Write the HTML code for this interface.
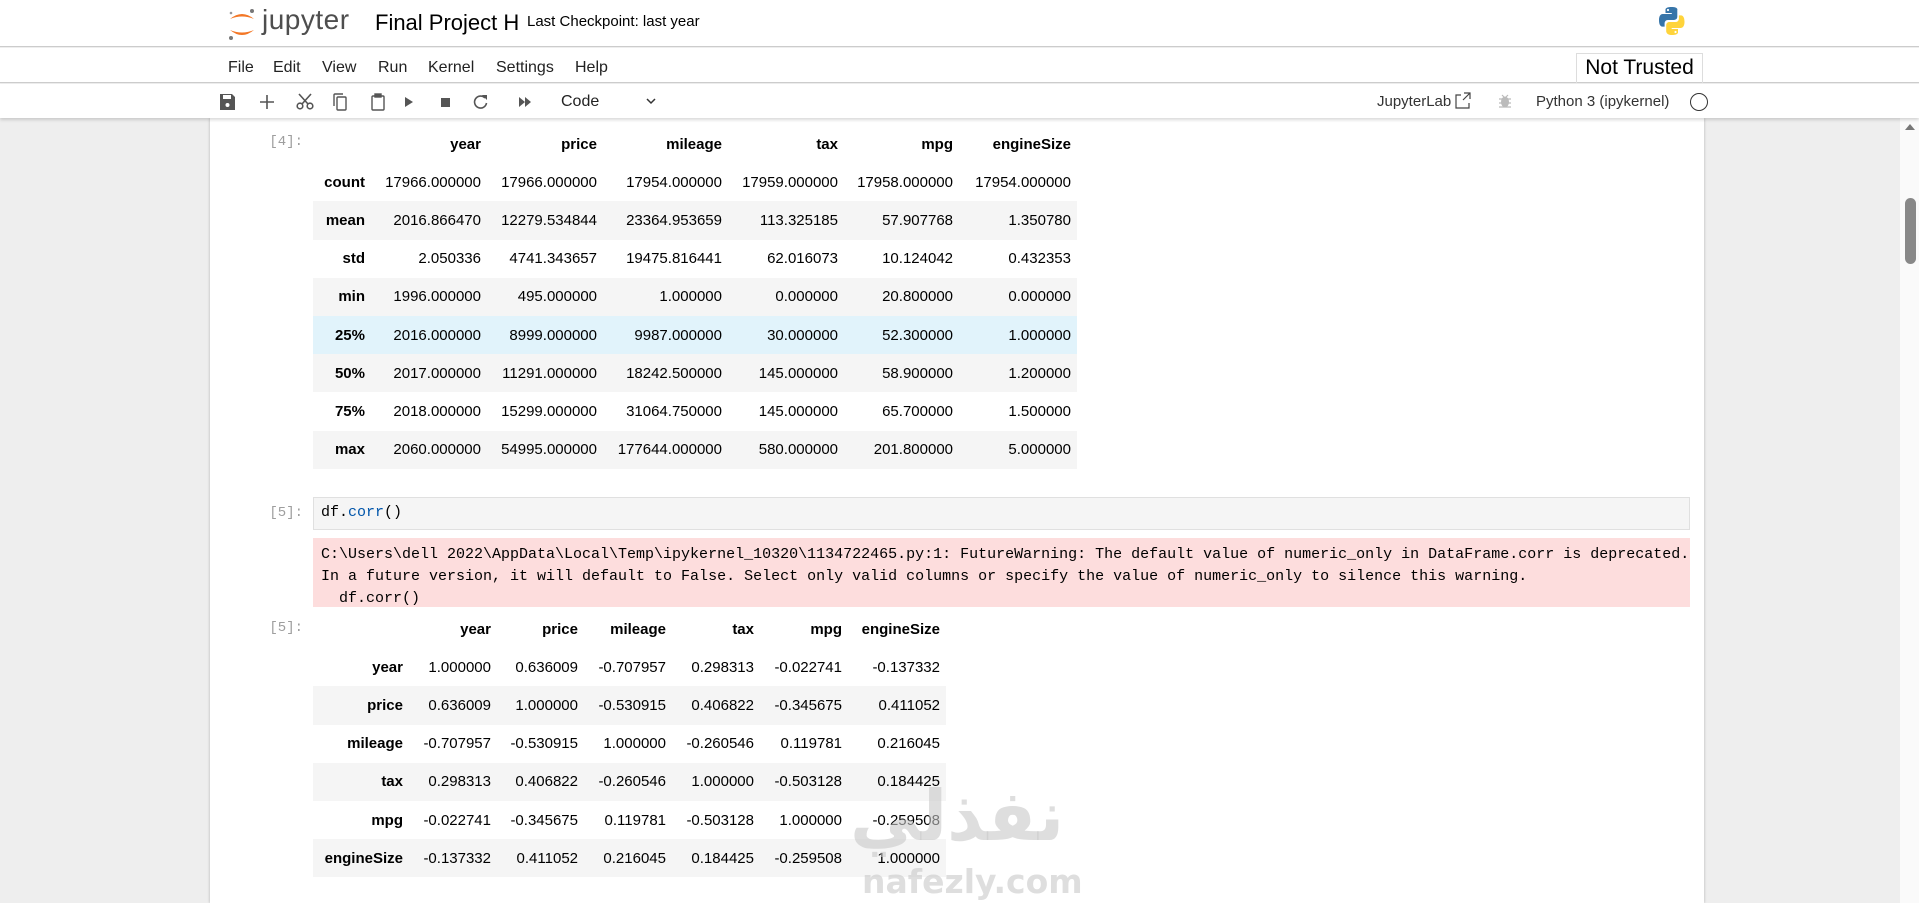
<!DOCTYPE html>
<html><head><meta charset="utf-8"><style>
*{margin:0;padding:0;box-sizing:border-box}
body{width:1919px;height:903px;overflow:hidden;font-family:"Liberation Sans",sans-serif;background:#eee;position:relative;color:#000}
.abs{position:absolute}
#hdr{left:0;top:0;width:1919px;height:47px;background:#fff;border-bottom:1px solid #ccc}
#menu{left:0;top:48px;width:1919px;height:35px;background:#fff;border-bottom:1px solid #ccc;font-size:16px;color:#222}
#tool{left:0;top:84px;width:1919px;height:34px;background:#fff;box-shadow:0 2px 3px rgba(0,0,0,.15);z-index:2}
#nb{left:210px;top:118px;width:1494px;height:785px;background:#fff;box-shadow:-1px 0 2px rgba(0,0,0,.12),1px 0 2px rgba(0,0,0,.12)}
.prompt{position:absolute;font-family:"Liberation Mono",monospace;font-size:14px;color:#9e9e9e;width:90px;text-align:right}
table{border-collapse:collapse;font-size:15px;position:absolute}
td,th{height:38.2px;text-align:right;padding:0 6px;white-space:nowrap}
th{font-weight:bold}
tbody tr:nth-child(even){background:#f5f5f5}
tr.hov{background:#e1f3fb!important}
.mono{font-family:"Liberation Mono",monospace;font-size:15px}
</style></head><body>
<div id="hdr" class="abs">
  <svg class="abs" style="left:224px;top:6px" width="36" height="36" viewBox="0 0 36 36">
    <path d="M6 13 Q18 3 30 13 Q18 8 6 13Z" fill="#f37726"/>
    <path d="M6 24 Q18 34 30 24 Q18 29 6 24Z" fill="#f37726"/>
    <circle cx="28" cy="5" r="2" fill="#767677"/><circle cx="7" cy="32" r="2" fill="#767677"/><circle cx="7" cy="7" r="1.3" fill="#989798"/>
  </svg>
  <div class="abs" style="left:262px;top:4px;font-size:28px;color:#4e4e4e;letter-spacing:0.5px">jupyter</div>
  <div class="abs" style="left:375px;top:10px;font-size:22px;color:#000">Final Project H</div>
  <div class="abs" style="left:527px;top:13px;font-size:15px;color:#000">Last Checkpoint: last year</div>
  <svg class="abs" style="left:1658px;top:6px" width="28" height="30" viewBox="0 0 28 30">
    <path d="M13.5 1C7 1 7.5 3.8 7.5 3.8V7h6.3v1H5s-4-.5-4 6.2 3.5 6.4 3.5 6.4h2.1v-3.1s-.1-3.5 3.4-3.5h6s3.300 0 3.3-3.2V4.3S20.8 1 13.5 1z" fill="#3775a9"/>
    <circle cx="10" cy="4" r="1.1" fill="#fff"/>
    <path d="M14 29c6.5 0 6-2.8 6-2.8V23h-6.3v-1h8.8s4 .5 4-6.2-3.5-6.4-3.5-6.4h-2.1v3.1s.1 3.5-3.4 3.5h-6s-3.3 0-3.3 3.2v5.5S7.7 29 14 29z" fill="#ffd43b"/>
    <circle cx="17.5" cy="26" r="1.1" fill="#fff"/>
  </svg>
</div>
<div id="menu" class="abs">
  <span class="abs" style="left:228px;top:11px">File</span>
  <span class="abs" style="left:273px;top:11px">Edit</span>
  <span class="abs" style="left:322px;top:11px">View</span>
  <span class="abs" style="left:378px;top:11px">Run</span>
  <span class="abs" style="left:428px;top:11px">Kernel</span>
  <span class="abs" style="left:496px;top:11px">Settings</span>
  <span class="abs" style="left:575px;top:11px">Help</span>
  <div class="abs" style="left:1576px;top:5px;width:127px;height:30px;border:1px solid #ddd;border-bottom:none;font-size:21px;color:#000;text-align:center;line-height:28px">Not Trusted</div>
</div>
<div id="tool" class="abs">
  <svg class="abs" style="left:219px;top:9px" width="330" height="18" viewBox="0 0 330 18" fill="#555" stroke="#555">
    <path d="M1 1h12l3 3v13H1z M4 2h8v4H4z" stroke="none" fill-rule="evenodd"/><circle cx="8.5" cy="12" r="2" fill="#fff" stroke="none"/>
    <path d="M48 2v14M41 9h14" stroke-width="1.6" fill="none"/>
    <g fill="none" stroke-width="1.6"><circle cx="81" cy="13" r="2.8"/><circle cx="91" cy="13" r="2.8"/><path d="M83 11L92 1M89 11L80 1"/></g>
    <g fill="none" stroke-width="1.4"><rect x="118" y="4" width="9" height="13" rx="1"/><path d="M115 13V2a1 1 0 0 1 1-1h8"/></g>
    <g fill="none" stroke-width="1.4"><rect x="153" y="3" width="12" height="14" rx="1"/><rect x="156" y="1" width="6" height="3" fill="#555"/></g>
    <path d="M186 4l8 5-8 5z" stroke="none"/>
    <rect x="222" y="5" width="9" height="9" stroke="none"/>
    <path d="M266 5a6 6 0 1 0 1.5 5" fill="none" stroke-width="1.6"/><path d="M263 2h5v5z" stroke="none"/>
    <path d="M300 4l6 5-6 5zM306 4l6 5-6 5z" stroke="none"/>
  </svg>
  <span class="abs" style="left:561px;top:9px;font-size:16px;color:#222">Code</span>
  <svg class="abs" style="left:645px;top:13px" width="12" height="10"><path d="M2 2l4 4 4-4" stroke="#333" stroke-width="1.5" fill="none"/></svg>
  <span class="abs" style="left:1377px;top:9px;font-size:15px;color:#333">JupyterLab</span>
  <svg class="abs" style="left:1455px;top:8px" width="16" height="18"><path d="M6 3H1v13h13v-5M9 1h6v6M15 1L8 8" stroke="#444" stroke-width="1.2" fill="none"/></svg>
  <svg class="abs" style="left:1498px;top:9px" width="14" height="16"><ellipse cx="7" cy="9" rx="4" ry="5.5" fill="#bbb"/><path d="M1 6h12M1 10h12M1 14h12M4 2l2 2M10 2l-2 2" stroke="#bbb" stroke-width="1.2"/></svg>
  <span class="abs" style="left:1536px;top:9px;font-size:15px;color:#333">Python 3 (ipykernel)</span>
  <div class="abs" style="left:1690px;top:9px;width:18px;height:18px;border:1.5px solid #333;border-radius:50%"></div>
</div>
<div class="abs" style="left:1900px;top:118px;width:19px;height:785px;background:#fafafa"></div>
<svg class="abs" style="left:1904px;top:122px" width="12" height="10"><path d="M1 8l5-6 5 6z" fill="#777"/></svg>
<div class="abs" style="left:1905px;top:198px;width:11px;height:66px;background:#888;border-radius:6px"></div>

<div id="nb" class="abs">
  <div class="prompt" style="left:0;top:16px;width:93px">[4]:</div>
  <table style="left:103px;top:7px">
    <thead><tr><th style="width:58px"></th><th style="width:116px">year</th><th style="width:116px">price</th><th style="width:125px">mileage</th><th style="width:116px">tax</th><th style="width:115px">mpg</th><th style="width:118px">engineSize</th></tr></thead>
    <tbody>
    <tr><th>count</th><td>17966.000000</td><td>17966.000000</td><td>17954.000000</td><td>17959.000000</td><td>17958.000000</td><td>17954.000000</td></tr>
    <tr><th>mean</th><td>2016.866470</td><td>12279.534844</td><td>23364.953659</td><td>113.325185</td><td>57.907768</td><td>1.350780</td></tr>
    <tr><th>std</th><td>2.050336</td><td>4741.343657</td><td>19475.816441</td><td>62.016073</td><td>10.124042</td><td>0.432353</td></tr>
    <tr><th>min</th><td>1996.000000</td><td>495.000000</td><td>1.000000</td><td>0.000000</td><td>20.800000</td><td>0.000000</td></tr>
    <tr class="hov"><th>25%</th><td>2016.000000</td><td>8999.000000</td><td>9987.000000</td><td>30.000000</td><td>52.300000</td><td>1.000000</td></tr>
    <tr><th>50%</th><td>2017.000000</td><td>11291.000000</td><td>18242.500000</td><td>145.000000</td><td>58.900000</td><td>1.200000</td></tr>
    <tr><th>75%</th><td>2018.000000</td><td>15299.000000</td><td>31064.750000</td><td>145.000000</td><td>65.700000</td><td>1.500000</td></tr>
    <tr><th>max</th><td>2060.000000</td><td>54995.000000</td><td>177644.000000</td><td>580.000000</td><td>201.800000</td><td>5.000000</td></tr>
    </tbody>
  </table>

  <div class="prompt" style="left:0;top:387px;width:93px">[5]:</div>
  <div class="abs mono" style="left:103px;top:379px;width:1377px;height:33px;background:#f5f5f5;border:1px solid #e0e0e0;padding:6px 7px;color:#000">df.<span style="color:#05a">corr</span>()</div>
  <div class="abs mono" style="left:103px;top:420px;width:1377px;height:69px;background:#fddddd;padding:6px 8px;line-height:22px;white-space:pre;color:#000">C:\Users\dell 2022\AppData\Local\Temp\ipykernel_10320\1134722465.py:1: FutureWarning: The default value of numeric_only in DataFrame.corr is deprecated.
In a future version, it will default to False. Select only valid columns or specify the value of numeric_only to silence this warning.
  df.corr()</div>

  <div class="prompt" style="left:0;top:502px;width:93px">[5]:</div>
  <table style="left:103px;top:492px">
    <thead><tr><th style="width:96px"></th><th style="width:88px">year</th><th style="width:87px">price</th><th style="width:88px">mileage</th><th style="width:88px">tax</th><th style="width:88px">mpg</th><th style="width:98px">engineSize</th></tr></thead>
    <tbody>
    <tr><th>year</th><td>1.000000</td><td>0.636009</td><td>-0.707957</td><td>0.298313</td><td>-0.022741</td><td>-0.137332</td></tr>
    <tr><th>price</th><td>0.636009</td><td>1.000000</td><td>-0.530915</td><td>0.406822</td><td>-0.345675</td><td>0.411052</td></tr>
    <tr><th>mileage</th><td>-0.707957</td><td>-0.530915</td><td>1.000000</td><td>-0.260546</td><td>0.119781</td><td>0.216045</td></tr>
    <tr><th>tax</th><td>0.298313</td><td>0.406822</td><td>-0.260546</td><td>1.000000</td><td>-0.503128</td><td>0.184425</td></tr>
    <tr><th>mpg</th><td>-0.022741</td><td>-0.345675</td><td>0.119781</td><td>-0.503128</td><td>1.000000</td><td>-0.259508</td></tr>
    <tr><th>engineSize</th><td>-0.137332</td><td>0.411052</td><td>0.216045</td><td>0.184425</td><td>-0.259508</td><td>1.000000</td></tr>
    </tbody>
  </table>
</div>
<div class="abs" style="left:850px;top:775px;font-family:'DejaVu Sans',sans-serif;font-size:70px;font-weight:bold;color:rgba(200,200,200,.6);direction:rtl">نفذلي</div>
<div class="abs" style="left:862px;top:862px;font-family:'DejaVu Sans',sans-serif;font-size:33px;font-weight:bold;color:rgba(200,200,200,.6)">nafezly.com</div>
</body></html>
